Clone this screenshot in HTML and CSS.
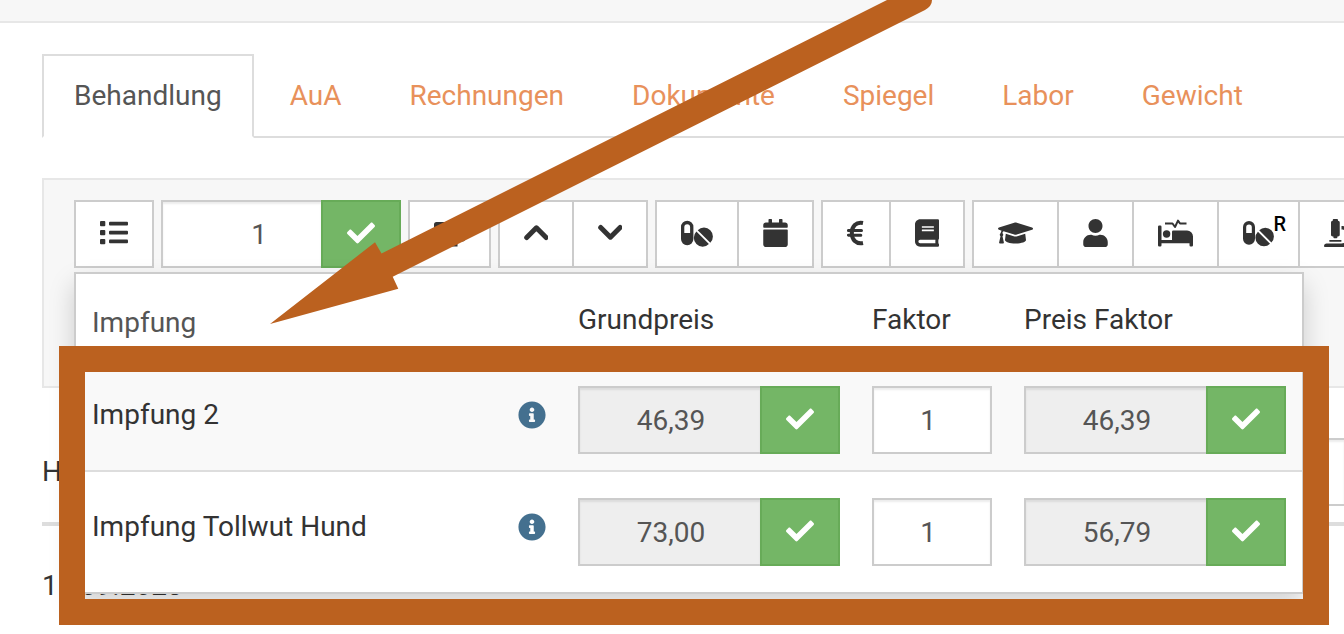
FILE: index.html
```html
<!DOCTYPE html>
<html lang="de">
<head>
<meta charset="utf-8">
<meta name="viewport" content="width=device-width, initial-scale=1">
<title>Behandlung</title>
<link rel="stylesheet" href="styles.css">
</head>
<body>
<svg class="sprite" aria-hidden="true">
  <symbol id="check" viewBox="0 0 512 512"><path d="M173.898 439.404l-166.4-166.4c-9.997-9.997-9.997-26.206 0-36.204l36.203-36.204c9.997-9.998 26.207-9.998 36.204 0L192 312.69 432.095 72.596c9.997-9.997 26.207-9.997 36.204 0l36.203 36.204c9.997 9.997 9.997 26.206 0 36.204l-294.4 294.401c-9.998 9.997-26.207 9.997-36.204-.001z"/></symbol>
  <symbol id="info" viewBox="0 0 512 512"><path d="M256 8C119.043 8 8 119.083 8 256c0 136.997 111.043 248 248 248s248-111.003 248-248C504 119.083 392.957 8 256 8zm0 110c23.196 0 42 18.804 42 42s-18.804 42-42 42-42-18.804-42-42 18.804-42 42-42zm56 254c0 6.627-5.373 12-12 12h-88c-6.627 0-12-5.373-12-12v-24c0-6.627 5.373-12 12-12h12v-64h-12c-6.627 0-12-5.373-12-12v-24c0-6.627 5.373-12 12-12h64c6.627 0 12 5.373 12 12v100h12c6.627 0 12 5.373 12 12v24z"/></symbol>
  <symbol id="pills" viewBox="0 0 32 28"><path fill-rule="evenodd" d="M6.2 1.7A6.2 6.2 0 0 1 12.400 7.900V20a6.200 6.200 0 0 1-12.400 0V7.900A6.200 6.200 0 0 1 6.200 1.700zM6.200 5.300A2.900 2.900 0 0 0 3.300 8.200V14H9.100V8.200A2.900 2.900 0 0 0 6.200 5.300z"/><path d="M16.700 11.200L29.300 23.800A8.800 8.800 0 0 0 16.700 11.200zM15.400 12.600L27.900 25.100A8.800 8.800 0 0 1 15.400 12.600z"/></symbol>
</svg>

<header class="topbar"></header>

<main class="page">
  <nav class="tabs">
    <a class="tab active" href="#behandlung">Behandlung</a>
    <a class="tab" href="#aua">AuA</a>
    <a class="tab" href="#rechnungen">Rechnungen</a>
    <a class="tab" href="#dokumente">Dokumente</a>
    <a class="tab" href="#spiegel">Spiegel</a>
    <a class="tab" href="#labor">Labor</a>
    <a class="tab" href="#gewicht">Gewicht</a>
  </nav>

  <section class="panel">
    <div class="toolbar">
      <button class="btn" type="button" aria-label="Liste"><svg class="w28" viewBox="0 0 28 28"><rect x="0" y="2" width="5.300" height="5.200" rx="1"/><rect x="0" y="11" width="5.300" height="5.200" rx="1"/><rect x="0" y="20" width="5.300" height="5.200" rx="1"/><rect x="9" y="2.800" width="19" height="3.700" rx="1"/><rect x="9" y="11.700" width="19" height="3.700" rx="1"/><rect x="9" y="20.600" width="19" height="3.700" rx="1"/></svg></button>
      <div class="group">
        <input class="field count" type="text" value="1" aria-label="Anzahl">
        <button class="btn ok" type="button" aria-label="Anzahl bestätigen"><svg class="w28"><use href="#check"/></svg></button>
      </div>
      <button class="btn" type="button" aria-label="Bildschirm"><svg class="w31" viewBox="0 0 31 28"><path d="M2.500 3H28.500A2.500 2.500 0 0 1 31 5.500V20A2.500 2.500 0 0 1 28.500 22.500H20L21 25H23.500V27.500H8V25H10.500L11.500 22.500H2.500A2.500 2.500 0 0 1 0 20V5.500A2.500 2.500 0 0 1 2.500 3z"/></svg></button>
      <div class="group">
        <button class="btn" type="button" aria-label="Nach oben"><svg class="w24 line" viewBox="0 0 24 28"><path d="M2.700 18.500L12.400 8.800L22.100 18.500"/></svg></button>
        <button class="btn" type="button" aria-label="Nach unten"><svg class="w24 line" viewBox="0 0 24 28"><path d="M2.700 8.500L12.400 18.200L22.100 8.500"/></svg></button>
      </div>
      <div class="group">
        <button class="btn" type="button" aria-label="Medikamente"><svg class="w32"><use href="#pills"/></svg></button>
        <button class="btn" type="button" aria-label="Kalender"><svg class="w25" viewBox="0 0 448 512"><path d="M12 192h424c6.600 0 12 5.400 12 12v260c0 26.500-21.500 48-48 48H48c-26.500 0-48-21.500-48-48V204c0-6.600 5.400-12 12-12zm436-44v-36c0-26.500-21.500-48-48-48h-48V12c0-6.600-5.400-12-12-12h-40c-6.600 0-12 5.400-12 12v52H160V12c0-6.600-5.400-12-12-12h-40c-6.600 0-12 5.400-12 12v52H48C21.500 64 0 85.500 0 112v36c0 6.600 5.400 12 12 12h424c6.600 0 12-5.400 12-12z"/></svg></button>
      </div>
      <div class="group">
        <button class="btn" type="button" aria-label="Euro"><svg class="w18 line" viewBox="0 0 18 28"><path class="euro" d="M16 4C9 2.600 4.800 7.300 4.800 14S9 25.400 16 24"/><path class="bars" d="M1.400 11.600H14.500M1.400 16.200H13.800"/></svg></button>
        <button class="btn" type="button" aria-label="Buch"><svg class="w24" viewBox="0 0 448 512"><path d="M448 360V24c0-13.300-10.700-24-24-24H96C43 0 0 43 0 96v320c0 53 43 96 96 96h328c13.300 0 24-10.700 24-24v-16c0-7.500-3.500-14.300-8.900-18.700-4.200-15.400-4.200-59.300 0-74.700 5.400-4.300 8.900-11.100 8.900-18.600zM128 134c0-3.300 2.700-6 6-6h212c3.300 0 6 2.700 6 6v20c0 3.300-2.700 6-6 6H134c-3.300 0-6-2.700-6-6v-20zm0 64c0-3.300 2.700-6 6-6h212c3.300 0 6 2.700 6 6v20c0 3.300-2.700 6-6 6H134c-3.300 0-6-2.700-6-6v-20zm253.400 250H96c-17.700 0-32-14.300-32-32 0-17.600 14.400-32 32-32h285.400c-1.900 17.100-1.900 46.900 0 64z"/></svg></button>
      </div>
      <div class="group">
        <button class="btn" type="button" aria-label="Ausbildung"><svg class="w35" viewBox="0 0 640 512"><path d="M622.340 153.200L343.400 67.500c-15.200-4.670-31.600-4.670-46.790 0L17.660 153.200c-23.540 7.230-23.540 38.360 0 45.590l48.630 14.940c-10.670 13.190-17.230 29.280-17.880 46.900C38.780 266.150 32 276.110 32 288c0 10.780 5.680 19.850 13.860 25.650L20.330 428.530C18.110 438.520 25.710 448 35.940 448h56.110c10.240 0 17.840-9.480 15.620-19.470L82.140 313.650C90.320 307.850 96 298.780 96 288c0-11.570-6.470-21.250-15.660-26.870.76-15.020 8.440-28.300 20.690-36.720L296.600 284.500c9.060 2.780 26.440 6.250 46.790 0l278.950-85.700c23.550-7.240 23.550-38.360 0-45.600zM352.790 315.090c-28.530 8.760-52.840 3.920-65.590 0l-145.020-44.550L128 384c0 35.350 85.960 64 192 64s192-28.650 192-64l-14.180-113.470-145.030 44.560z"/></svg></button>
        <button class="btn" type="button" aria-label="Kunde"><svg class="w25" viewBox="0 0 448 512"><path d="M224 256c70.700 0 128-57.300 128-128S294.700 0 224 0 96 57.300 96 128s57.300 128 128 128zm89.600 32h-16.700c-22.200 10.200-46.900 16-72.900 16s-50.600-5.800-72.900-16h-16.700C60.200 288 0 348.200 0 422.400V464c0 26.500 21.500 48 48 48h352c26.500 0 48-21.500 48-48v-41.600c0-74.200-60.200-134.400-134.400-134.400z"/></svg></button>
        <button class="btn" type="button" aria-label="Station"><svg class="w35" viewBox="0 0 35 28"><path d="M1.200 6.500H2.300A1.200 1.200 0 0 1 3.500 7.700V21H14V12.800A1.300 1.300 0 0 1 15.300 11.500H29A6 6 0 0 1 35 17.500V26.300A1.200 1.200 0 0 1 33.800 27.500H32.700A1.200 1.200 0 0 1 31.500 26.300V24.300H3.500V26.300A1.200 1.200 0 0 1 2.300 27.500H1.200A1.200 1.200 0 0 1 0 26.300V7.700A1.200 1.200 0 0 1 1.200 6.500z"/><circle cx="8.600" cy="15" r="3.700"/><path class="pulse" d="M7 4.500H14.500L17 8L20 1.600L22 4.500H28.500"/></svg></button>
        <button class="btn marked" type="button" aria-label="Rezept"><svg class="w31"><use href="#pills"/></svg><span class="mark">R</span></button>
        <button class="btn" type="button" aria-label="Labor"><svg class="w28" viewBox="0 0 512 512"><path d="M160 320h12v16c0 8.840 7.160 16 16 16h40c8.840 0 16-7.160 16-16v-16h12c17.670 0 32-14.330 32-32V64c0-17.670-14.330-32-32-32V16c0-8.840-7.160-16-16-16h-64c-8.840 0-16 7.160-16 16v16c-17.670 0-32 14.330-32 32v224c0 17.670 14.330 32 32 32zm304 128h-1.290C493.240 413.990 512 369.200 512 320c0-105.880-86.120-192-192-192v64c70.580 0 128 57.420 128 128s-57.420 128-128 128H48c-26.510 0-48 21.490-48 48 0 8.840 7.160 16 16 16h480c8.840 0 16-7.160 16-16 0-26.510-21.490-48-48-48zm-360-32h208c4.420 0 8-3.580 8-8v-16c0-4.420-3.580-8-8-8H104c-4.420 0-8 3.580-8 8v16c0 4.420 3.580 8 8 8z"/></svg></button>
      </div>
    </div>

    <div class="dropdown">
      <table class="prices">
        <thead>
          <tr>
            <th class="search"><input class="query" type="text" value="Impfung" aria-label="Leistung suchen"></th>
            <th class="wide">Grundpreis</th>
            <th class="narrow">Faktor</th>
            <th class="wide">Preis Faktor</th>
          </tr>
        </thead>
        <tbody>
          <tr class="odd">
            <td><div class="name"><span>Impfung 2</span><svg class="info" role="img" aria-label="Info"><use href="#info"/></svg></div></td>
            <td><div class="group"><input class="field" type="text" value="46,39" readonly aria-label="Grundpreis"><button class="btn ok" type="button" aria-label="Grundpreis übernehmen"><svg class="w28"><use href="#check"/></svg></button></div></td>
            <td><input class="field factor" type="text" value="1" aria-label="Faktor"></td>
            <td><div class="group"><input class="field" type="text" value="46,39" readonly aria-label="Preis Faktor"><button class="btn ok" type="button" aria-label="Preis übernehmen"><svg class="w28"><use href="#check"/></svg></button></div></td>
          </tr>
          <tr>
            <td><div class="name"><span>Impfung Tollwut Hund</span><svg class="info" role="img" aria-label="Info"><use href="#info"/></svg></div></td>
            <td><div class="group"><input class="field" type="text" value="73,00" readonly aria-label="Grundpreis"><button class="btn ok" type="button" aria-label="Grundpreis übernehmen"><svg class="w28"><use href="#check"/></svg></button></div></td>
            <td><input class="field factor" type="text" value="1" aria-label="Faktor"></td>
            <td><div class="group"><input class="field" type="text" value="56,79" readonly aria-label="Preis Faktor"><button class="btn ok" type="button" aria-label="Preis übernehmen"><svg class="w28"><use href="#check"/></svg></button></div></td>
          </tr>
        </tbody>
      </table>
    </div>
  </section>

  <section class="history">
    <div class="history-head">
      <label for="filter">Historie</label>
      <input class="field filter" id="filter" type="text">
    </div>
    <p class="date">15.09.2023</p>
  </section>
</main>

<div class="highlight"></div>
<svg class="arrow" viewBox="0 0 664 324" aria-hidden="true"><path d="M0 324L105 242.300L111.500 253.500L617 0H662Q662 6 655 10L122.700 276.700L128.300 288.700z"/></svg>
</body>
</html>
```
FILE: styles.css
```css
* {
  box-sizing: border-box;
}

body {
  position: relative;
  min-height: 100vh;
  margin: 0;
  overflow: hidden;
  background: #fff;
  color: #333;
  font: 28px/40px Roboto, "Liberation Sans", sans-serif;
}

input,
button {
  margin: 0;
  border-radius: 0;
  font: inherit;
}

.sprite {
  position: absolute;
  width: 0;
  height: 0;
}

.topbar {
  height: 23px;
  background: #f7f7f7;
  border-bottom: 2px solid #e7e7e7;
}

.page {
  padding: 31px 0 0 42px;
}

.tabs {
  display: flex;
  gap: 4px;
  border-bottom: 2px solid #ddd;
}

.tab {
  margin-bottom: -2px;
  padding: 20px 30px;
  border: 2px solid transparent;
  color: #e8915b;
  text-decoration: none;
}

.tab.active {
  background: #fff;
  border-color: #ddd;
  border-bottom-color: #fff;
  color: #555;
}

.panel {
  position: relative;
  min-height: 210px;
  margin-top: 40px;
  padding: 20px 0 20px 30px;
  background: #f7f7f7;
  border: 2px solid #e7e7e7;
  border-right: 0;
}

.toolbar {
  display: flex;
  gap: 7px;
  overflow: hidden;
}

.toolbar > * {
  flex: none;
}

.group {
  display: flex;
}

.group > * + * {
  margin-left: -2px;
}

.btn {
  display: flex;
  flex: none;
  align-items: center;
  justify-content: center;
  height: 68px;
  padding: 0 24px 2px;
  background: #fff;
  border: 2px solid #ccc;
  color: #333;
}

.btn.ok {
  background: #74b666;
  border-color: #67ab58;
  color: #fff;
}

.btn svg {
  flex: none;
  height: 28px;
  fill: currentColor;
}

.w18 { width: 18px; }
.w24 { width: 24px; }
.w25 { width: 25px; }
.w28 { width: 28px; }
.w31 { width: 31px; }
.w32 { width: 32px; }
.w35 { width: 35px; }

.btn .line {
  fill: none;
  stroke: currentColor;
  stroke-width: 5;
  stroke-linecap: round;
  stroke-linejoin: round;
}

.btn .euro {
  stroke-width: 4;
  stroke-linecap: butt;
}

.btn .bars {
  stroke-width: 3;
}

.pulse {
  fill: none;
  stroke: currentColor;
  stroke-width: 2;
  stroke-linejoin: round;
}

.marked {
  position: relative;
}

.mark {
  position: absolute;
  top: 12px;
  right: 12px;
  color: #000;
  font-size: 20px;
  font-weight: 500;
  line-height: 20px;
}

.field {
  width: 100%;
  min-width: 0;
  height: 68px;
  padding: 0 0 0 2px;
  background: #fff;
  border: 2px solid #ccc;
  box-shadow: inset 0 2px 2px rgba(0, 0, 0, 0.075);
  color: #555;
  text-align: center;
}

.field[readonly] {
  background: #eee;
}

.field.count {
  width: 162px;
  padding-left: 34px;
}

.field.factor {
  padding: 0 8px 0 0;
}

.dropdown {
  position: absolute;
  z-index: 1;
  top: 92px;
  left: 30px;
  right: 40px;
  padding-bottom: 10px;
  background: #fff;
  border: 2px solid #ccc;
  box-shadow: 0 12px 24px rgba(0, 0, 0, 0.175);
}

.prices {
  width: 100%;
  table-layout: fixed;
  border-spacing: 0;
}

.prices th {
  height: 84px;
  padding: 26px 16px 0;
  font-weight: 400;
  text-align: left;
  vertical-align: top;
}

.prices .search {
  padding-top: 14px;
}

.wide {
  width: 294px;
}

.narrow {
  width: 152px;
}

.query {
  width: 100%;
  height: 68px;
  padding: 0;
  background: none;
  border: 0;
  color: #555;
}

.prices td {
  padding: 26px 16px 16px;
  border-top: 2px solid #ddd;
  vertical-align: top;
}

.odd {
  background: #f9f9f9;
}

.name {
  display: flex;
  align-items: center;
  justify-content: space-between;
  padding-top: 9px;
}

.info {
  width: 28px;
  height: 28px;
  fill: #44708f;
}

.history {
  padding-top: 50px;
}

.history-head {
  display: flex;
  align-items: center;
  justify-content: space-between;
  padding-bottom: 16px;
  border-bottom: 4px solid #ddd;
}

.filter {
  width: 240px;
  border-right: 0;
}

.date {
  margin: 40px 0 0;
}

.highlight {
  position: absolute;
  z-index: 2;
  top: 346px;
  left: 59px;
  right: 15px;
  height: 279px;
  border: 26px solid #bb611f;
  pointer-events: none;
}

.arrow {
  position: absolute;
  z-index: 2;
  top: 0;
  left: 270px;
  width: 664px;
  height: 324px;
  fill: #bb611f;
  pointer-events: none;
}
```
